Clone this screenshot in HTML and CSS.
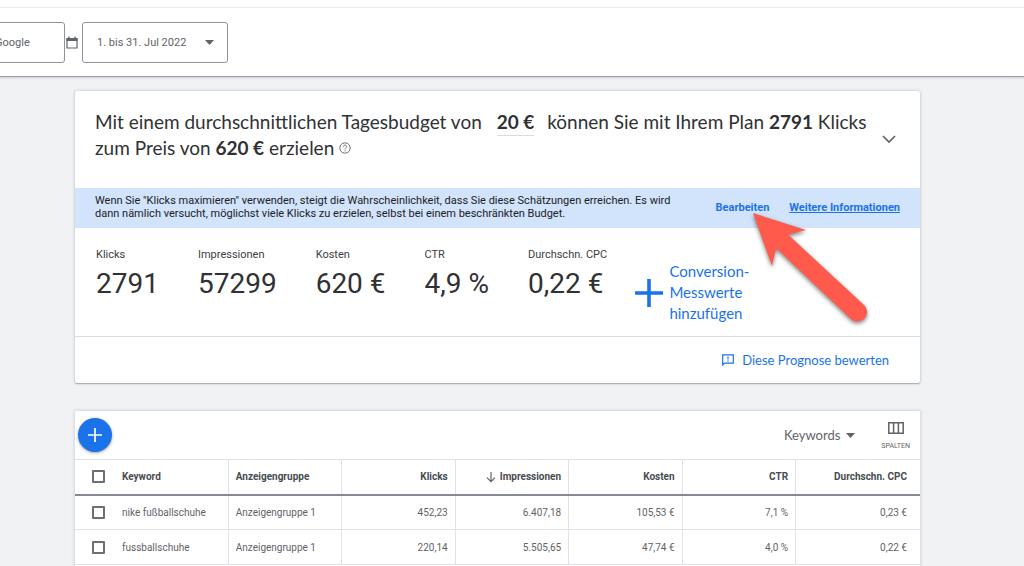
FILE: index.html
```html
<!DOCTYPE html>
<html lang="de">
<head>
<meta charset="utf-8">
<title>Keyword-Planer</title>
<link rel="stylesheet" href="styles.css">
</head>
<body>
<header class="topbar">
  <button class="box network" type="button">Google</button>
  <svg class="calendar" viewBox="0 0 12 13" aria-hidden="true"><path d="M1 2.5h10v9.5H1z" fill="none" stroke="#5f6368" stroke-width="1.2"/><path d="M.5 2h11v3H.5zM2.3.5h1.4V3H2.3zM8.3.5h1.4V3H8.3z" fill="#5f6368"/></svg>
  <div class="period">
    <select class="box period-select" aria-label="Zeitraum"><option>1. bis 31. Jul 2022</option></select>
    <svg class="caret" viewBox="0 0 10 5" aria-hidden="true"><path d="M0 0h9L4.500 5z" fill="#5f6368"/></svg>
  </div>
</header>
<main class="content">
  <section class="card forecast">
    <div class="summary">
      <h1 class="headline">Mit einem durchschnittlichen Tagesbudget von <b class="budget">20 €</b> können Sie mit Ihrem Plan <b>2791</b> Klicks zum Preis von <b>620 €</b> erzielen <svg class="help" viewBox="0 0 12 12" role="img" aria-label="Hilfe"><circle cx="6" cy="6" r="5.200" fill="none" stroke="#70757a"/><path d="M4.300 4.800C4.300 2.600 7.700 2.600 7.700 4.700 7.700 6 6 6 6 7.400M6 8.300v1.100" fill="none" stroke="#70757a"/></svg></h1>
      <button class="plain collapse" type="button" aria-label="Einklappen"><svg viewBox="0 0 14 9"><path d="M1 1l6 6 6-6" fill="none" stroke="#5f6368" stroke-width="1.700"/></svg></button>
    </div>
    <div class="notice">
      <p class="notice-text">Wenn Sie "Klicks maximieren" verwenden, steigt die Wahrscheinlichkeit, dass Sie diese Schätzungen erreichen. Es wird dann nämlich versucht, möglichst viele Klicks zu erzielen, selbst bei einem beschränkten Budget.</p>
      <a class="notice-link" href="#">Bearbeiten</a>
      <a class="notice-link underlined" href="#">Weitere Informationen</a>
    </div>
    <div class="metrics">
      <dl class="metric"><dt>Klicks</dt><dd>2791</dd></dl>
      <dl class="metric"><dt>Impressionen</dt><dd>57299</dd></dl>
      <dl class="metric"><dt>Kosten</dt><dd>620 €</dd></dl>
      <dl class="metric"><dt>CTR</dt><dd>4,9 %</dd></dl>
      <dl class="metric"><dt>Durchschn. CPC</dt><dd>0,22 €</dd></dl>
      <button class="plain add-metric" type="button">
        <svg viewBox="0 0 28 28" aria-hidden="true"><path d="M14 0v28M0 14h28" stroke="#1a73e8" stroke-width="3.600"/></svg>
        <span>Conversion-<br>Messwerte<br>hinzufügen</span>
      </button>
    </div>
    <div class="feedback">
      <button class="plain rate" type="button">
        <svg viewBox="0 0 12 12" aria-hidden="true"><path d="M.7 11V.9h10.600v8.200H2.600z" fill="none" stroke="#1a73e8" stroke-width="1.200"/><path d="M6 2.500v3M6 6.500v1.200" stroke="#1a73e8" stroke-width="1.200"/></svg>
        Diese Prognose bewerten
      </button>
    </div>
    <svg class="pointer" viewBox="0 0 120 116" aria-hidden="true"><path d="M3 3L56 20 38 24.500 113.500 94.500A9.500 9.500 0 0 1 101.500 109.500L26 38 22 56z" fill="#ff5a4b"/></svg>
  </section>

  <section class="card keywords">
    <div class="toolbar">
      <button class="plain fab" type="button" aria-label="Hinzufügen"><svg viewBox="0 0 14 14"><path d="M7 0v14M0 7h14" stroke="#fff" stroke-width="1.700"/></svg></button>
      <button class="plain view" type="button">Keywords <svg class="view-caret" viewBox="0 0 9 5"><path d="M0 0h9L4.500 5z" fill="#5f6368"/></svg></button>
      <button class="plain columns" type="button">
        <svg viewBox="0 0 16 12" aria-hidden="true"><path d="M.8.8h14.400v10.400H.8zM5.600 1v10M10.400 1v10" fill="none" stroke="#5f6368" stroke-width="1.500"/></svg>
        SPALTEN
      </button>
    </div>
    <table class="grid">
      <colgroup><col class="col-check"><col class="col-key"><col class="col-std"><col class="col-std"><col class="col-std"><col class="col-std"><col class="col-std"><col></colgroup>
      <thead>
        <tr><th class="check"><input type="checkbox" aria-label="Alle auswählen"></th><th>Keyword</th><th>Anzeigengruppe</th><th class="num">Klicks</th><th class="num"><svg class="sort" viewBox="0 0 10 11" aria-hidden="true"><path d="M5 0v9.500M1 5.700l4 4 4-4" fill="none" stroke="#5f6368" stroke-width="1.200"/></svg>Impressionen</th><th class="num">Kosten</th><th class="num">CTR</th><th class="num">Durchschn. CPC</th></tr>
      </thead>
      <tbody>
        <tr><td class="check"><input type="checkbox" aria-label="nike fußballschuhe"></td><td>nike fußballschuhe</td><td>Anzeigengruppe 1</td><td class="num">452,23</td><td class="num">6.407,18</td><td class="num">105,53 €</td><td class="num">7,1 %</td><td class="num">0,23 €</td></tr>
        <tr><td class="check"><input type="checkbox" aria-label="fussballschuhe"></td><td>fussballschuhe</td><td>Anzeigengruppe 1</td><td class="num">220,14</td><td class="num">5.505,65</td><td class="num">47,74 €</td><td class="num">4,0 %</td><td class="num">0,22 €</td></tr>
      </tbody>
    </table>
  </section>
</main>
</body>
</html>
```
FILE: styles.css
```css
* { box-sizing: border-box; }
body {
  margin: 0;
  min-height: 100vh;
  display: flex;
  flex-direction: column;
  background: #f1f2f4;
  color: #3c4043;
  font-family: Roboto, "Liberation Sans", sans-serif;
  font-size: 11px;
  overflow-x: hidden;
}
button, select { font: inherit; color: inherit; }
svg { display: block; flex: none; }
.plain { border: 0; padding: 0; background: none; }

.topbar {
  display: flex;
  align-items: center;
  height: 76px;
  padding-top: 8px;
  background: linear-gradient(#e8eaed, #e8eaed) 0 7px / 100% 1px no-repeat #fff;
  box-shadow: 0 1px 1px #9aa0a6, 0 2px 3px #d5d8dc;
}
.box {
  height: 41px;
  border: 1px solid #8e949c;
  border-radius: 3px;
  background: #fff;
  color: #5f6368;
}
.network { width: 100px; margin-left: -35px; padding: 0 0 0 29px; text-align: left; }
.calendar { width: 12px; height: 13px; margin: 0 4px 0 1px; }
.period { position: relative; }
.period-select { width: 146px; padding: 0 14px; appearance: none; }
.caret { position: absolute; right: 13px; top: 18px; width: 10px; height: 5px; pointer-events: none; }

.content {
  flex: 1;
  display: flex;
  flex-direction: column;
  gap: 28px;
  padding: 15px 104px 0 75px;
}
.card { background: #fff; box-shadow: 0 1px 1px #a9adb3, 0 0 3px 1px #d3d6da; }
.forecast { position: relative; border-radius: 2px; }

.summary {
  display: flex;
  align-items: center;
  justify-content: space-between;
  gap: 12px;
  padding: 18px 24px 27px 20px;
}
.headline {
  margin: 0;
  font-family: Lato, Roboto, sans-serif;
  font-size: 19px;
  line-height: 26px;
  font-weight: 400;
  color: #303134;
}
.budget { margin: 0 8px 0 10px; padding-bottom: 2px; border-bottom: 1px solid #dadce0; }
.help { display: inline-block; width: 12px; height: 12px; vertical-align: 1px; }
.collapse { padding-top: 8px; }
.collapse svg { width: 14px; height: 9px; }

.notice {
  display: flex;
  align-items: center;
  gap: 20px;
  padding: 6px 20px 8px;
  background: #d2e3fc;
  color: #202124;
  line-height: 13px;
}
.notice-text { flex: 1; margin: 0 18px 0 0; }
.notice-link { color: #1a73e8; font-weight: 700; text-decoration: none; }
.underlined { text-decoration: underline; }

.metrics { display: flex; gap: 39px; padding: 20px 21px 12px; }
.metric { margin: 0; white-space: nowrap; }
.metric dt { width: 0; line-height: 14px; }
.metric dd { margin: 5px 0 0; font-size: 28px; line-height: 34px; color: #303134; }
.add-metric {
  display: flex;
  align-items: center;
  gap: 6px;
  margin-top: 13px;
  margin-left: -7px;
  color: #1a73e8;
  font-family: Lato, Roboto, sans-serif;
  font-size: 15px;
  line-height: 21px;
  text-align: left;
}
.add-metric svg { width: 28px; height: 28px; }

.feedback {
  display: flex;
  justify-content: flex-end;
  padding: 13px 31px 13px;
  border-top: 1px solid #dadce0;
}
.rate {
  display: flex;
  align-items: center;
  gap: 8px;
  color: #1a73e8;
  font-family: Lato, Roboto, sans-serif;
  font-size: 13px;
  line-height: 20px;
}
.rate svg { width: 12px; height: 12px; }
.pointer {
  position: absolute;
  right: 50px;
  top: 119px;
  width: 120px;
  height: 116px;
  filter: drop-shadow(0 2px 2px rgba(0, 0, 0, .5));
}

.keywords { flex: 1; box-shadow: 0 0 3px 1px #d3d6da; }
.toolbar { display: flex; align-items: center; height: 48px; padding: 0 10px 0 3px; }
.fab {
  display: grid;
  place-items: center;
  width: 34px;
  height: 34px;
  margin-right: auto;
  border-radius: 50%;
  background: #1a73e8;
  box-shadow: 0 1px 3px rgba(60, 64, 67, .5);
}
.fab svg { width: 14px; height: 14px; }
.view {
  display: flex;
  align-items: center;
  gap: 6px;
  margin-right: 26px;
  color: #5f6368;
  font-family: Lato, Roboto, sans-serif;
  font-size: 13px;
}
.view-caret { width: 9px; height: 5px; }
.columns {
  display: flex;
  flex-direction: column;
  align-items: center;
  gap: 7px;
  padding-top: 3px;
  color: #5f6368;
  font-size: 7px;
  line-height: 10px;
}
.columns svg { width: 16px; height: 12px; }

.grid { width: 100%; table-layout: fixed; border-collapse: collapse; font-size: 10px; }
.col-check { width: 40px; }
.col-key { width: 13.4%; }
.col-std { width: 13.43%; }
.grid th, .grid td {
  height: 35px;
  padding: 0 7px;
  border: 1px solid #e0e2e5;
  border-width: 1px 0 1px 1px;
  text-align: left;
  white-space: nowrap;
  color: #5f6368;
}
.grid th { font-weight: 700; color: #474b50; border-bottom: 2px solid #858a92; }
.grid .check, .grid .check + * { border-left: 0; }
.grid .check { padding: 0 0 0 17px; }
.grid .num { text-align: right; }
.grid .num:last-child { padding-right: 13px; }
.grid input {
  display: block;
  width: 13px;
  height: 13px;
  margin: 0;
  appearance: none;
  border: 2px solid #6b7076;
  border-radius: 1px;
  background: #fff;
}
.sort { display: inline-block; width: 10px; height: 11px; margin-right: 4px; vertical-align: -3px; }
```
